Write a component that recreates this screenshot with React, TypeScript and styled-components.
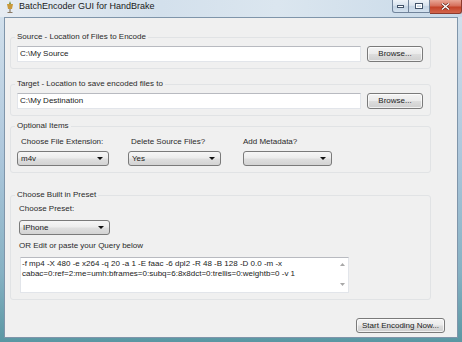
import * as React from 'react';
import styled, { createGlobalStyle } from 'styled-components';

const GlobalStyle = createGlobalStyle`
  html, body {
    margin: 0;
    padding: 0;
    background: #ffffff;
  }
  body {
    font-family: "Liberation Sans", Arial, sans-serif;
    color: #2a2a2a;
  }
  * {
    box-sizing: border-box;
  }
`;

const Window = styled.div`
  width: 462px;
  height: 342px;
  display: flex;
  flex-direction: column;
  background: linear-gradient(180deg, #d6e3ee 0%, #adc7dc 45%, #86b1c3 80%, #5a97a3 100%);
  overflow: hidden;
`;

const TitleBar = styled.div`
  height: 17px;
  display: flex;
  align-items: flex-start;
  background: linear-gradient(90deg, #e6ecf2 0%, #d3e0ec 35%, #dbe6ef 60%, #c8d9e8 100%);
`;

const AppIcon = styled.svg`
  width: 10px;
  height: 12px;
  margin: 1px 0 0 5px;
  flex-shrink: 0;
`;

const Title = styled.div`
  margin-left: 4px;
  font-size: 9px;
  line-height: 13px;
  color: #1a1a1a;
  white-space: nowrap;
`;

const Controls = styled.div`
  margin-left: auto;
  display: flex;
  height: 13px;
`;

const CaptionButton = styled.div<{ $w: number; $close?: boolean; $first?: boolean }>`
  width: ${(p) => p.$w}px;
  height: ${(p) => (p.$close ? 14 : 13)}px;
  display: flex;
  align-items: center;
  justify-content: center;
  border: 1px solid ${(p) => (p.$close ? '#8d3b2e' : '#71849b')};
  border-top: none;
  border-left: ${(p) => (p.$first ? '1px solid #71849b' : 'none')};
  border-bottom-left-radius: ${(p) => (p.$first ? 3 : 0)}px;
  border-bottom-right-radius: ${(p) => (p.$close ? 3 : 0)}px;
  background: ${(p) =>
    p.$close
      ? 'linear-gradient(180deg, #e9a797 0%, #d6705c 45%, #c44329 55%, #d2654c 100%)'
      : 'linear-gradient(180deg, #eef3f8 0%, #d8e3ee 45%, #c3d3e3 55%, #d4e2ef 100%)'};
`;

const Client = styled.div`
  flex: 1;
  margin: 0 4px 4px 4px;
  background: #f0f0f0;
  border: 1px solid #7f95aa;
  padding: 13px 0 0 5px;
  display: flex;
  flex-direction: column;
`;

const GroupBox = styled.fieldset<{ $gap: number }>`
  width: 421px;
  min-width: 0;
  margin: ${(p) => p.$gap}px 0 0 0;
  padding: 0 7px 6px 6px;
  border: 1px solid #e1e3e5;
  border-radius: 3px;
`;

const Caption = styled.legend`
  padding: 0 2px;
  margin-left: -2px;
  font-size: 8px;
  line-height: 12px;
  color: #2a2a2a;
`;

const PathRow = styled.div`
  margin-top: 3px;
  display: flex;
  align-items: center;
  gap: 6px;
`;

const TextBox = styled.div`
  flex: 1;
  height: 16px;
  background: #ffffff;
  border: 1px solid #e2e5ea;
  border-top-color: #b8bac0;
  padding-left: 2px;
  font-size: 8px;
  line-height: 14px;
  color: #222;
  white-space: nowrap;
`;

const PushButton = styled.div<{ $w: number }>`
  width: ${(p) => p.$w}px;
  height: 16px;
  border: 1px solid #7a7a7a;
  border-radius: 3px;
  background: linear-gradient(180deg, #f4f4f4 0%, #ebebeb 48%, #dddddd 52%, #cfcfcf 100%);
  box-shadow: inset 0 0 0 1px rgba(255, 255, 255, 0.7);
  font-size: 8px;
  line-height: 14px;
  text-align: center;
  color: #222;
  white-space: nowrap;
`;

const OptionsRow = styled.div`
  display: flex;
  margin-top: 4px;
`;

const OptionColumn = styled.div<{ $w?: number }>`
  width: ${(p) => (p.$w ? `${p.$w}px` : 'auto')};
  display: flex;
  flex-direction: column;
`;

const FieldLabel = styled.div<{ $indent?: number; $top?: number }>`
  padding-left: ${(p) => p.$indent ?? 0}px;
  margin-top: ${(p) => p.$top ?? 0}px;
  font-size: 8px;
  line-height: 12px;
  color: #2a2a2a;
  white-space: nowrap;
`;

const Combo = styled.div<{ $w: number; $top?: number }>`
  width: ${(p) => p.$w}px;
  height: 15px;
  margin-top: ${(p) => p.$top ?? 3}px;
  display: flex;
  align-items: center;
  padding: 0 5px 0 3px;
  border: 1px solid #7a7a7a;
  border-radius: 3px;
  background: linear-gradient(180deg, #f6f6f6 0%, #ececec 48%, #dfdfdf 52%, #d3d3d3 100%);
  font-size: 8px;
  color: #222;
`;

const ComboText = styled.span`
  flex: 1;
  white-space: nowrap;
`;

const ComboArrow = styled.span`
  width: 0;
  height: 0;
  border-left: 3px solid transparent;
  border-right: 3px solid transparent;
  border-top: 3px solid #111;
`;

const PresetBody = styled.div`
  padding-left: 2px;
  display: flex;
  flex-direction: column;
  align-items: flex-start;
`;

const QueryBox = styled.div`
  width: 329px;
  height: 36px;
  margin: 5px 0 0 1px;
  display: flex;
  background: #ffffff;
  border: 1px solid #e2e5ea;
  border-top-color: #b8bac0;
`;

const QueryText = styled.div`
  flex: 1;
  padding: 1px 0 0 1px;
  font-size: 8px;
  line-height: 10px;
  color: #222;
  white-space: nowrap;
  overflow: hidden;
`;

const ScrollBar = styled.div`
  width: 12px;
  display: flex;
  flex-direction: column;
  align-items: center;
  justify-content: space-between;
  padding: 5px 0 6px 0;
`;

const ScrollArrow = styled.svg`
  width: 5px;
  height: 3px;
`;

const StartButton = styled(PushButton)`
  align-self: flex-end;
  margin: 18px 12px 0 0;
  height: 15px;
  line-height: 13px;
`;

const ComboBox = ({ w, value, top }: { w: number; value?: string; top?: number }) => (
  <Combo $w={w} $top={top}>
    <ComboText>{value}</ComboText>
    <ComboArrow />
  </Combo>
);

export default function App() {
  return (
    <>
      <GlobalStyle />
      <Window>
        <TitleBar>
          <AppIcon viewBox="0 0 10 12">
            <path d="M5 0 L6 3 L4 3 Z" fill="#6c8f3a" />
            <path d="M2 3 L8 3 L7 8 L3 8 Z" fill="#c99a3c" />
            <rect x="4.4" y="8" width="1.2" height="3" fill="#8a7a66" />
            <rect x="2.5" y="11" width="5" height="1" fill="#8a7a66" />
          </AppIcon>
          <Title>BatchEncoder GUI for HandBrake</Title>
          <Controls>
            <CaptionButton $w={17} $first>
              <svg width="7" height="3" viewBox="0 0 7 3">
                <rect x="0.5" y="0.5" width="6" height="2" fill="#fff" stroke="#42546a" strokeWidth="1" />
              </svg>
            </CaptionButton>
            <CaptionButton $w={21}>
              <svg width="8" height="6" viewBox="0 0 8 6">
                <rect x="0.5" y="0.5" width="7" height="5" fill="none" stroke="#42546a" strokeWidth="1" />
                <rect x="1.5" y="1.5" width="5" height="3" fill="none" stroke="#ffffff" strokeWidth="1" />
              </svg>
            </CaptionButton>
            <CaptionButton $w={32} $close>
              <svg width="9" height="7" viewBox="0 0 9 7">
                <path d="M1 0.5 L8 6.5 M8 0.5 L1 6.5" stroke="#5a1a10" strokeWidth="2.6" />
                <path d="M1 0.5 L8 6.5 M8 0.5 L1 6.5" stroke="#ffffff" strokeWidth="1.4" />
              </svg>
            </CaptionButton>
          </Controls>
        </TitleBar>

        <Client>
          <GroupBox $gap={0}>
            <Caption>Source - Location of Files to Encode</Caption>
            <PathRow>
              <TextBox>C:\My Source</TextBox>
              <PushButton $w={56}>Browse...</PushButton>
            </PathRow>
          </GroupBox>

          <GroupBox $gap={9}>
            <Caption>Target - Location to save encoded files to</Caption>
            <PathRow>
              <TextBox>C:\My Destination</TextBox>
              <PushButton $w={56}>Browse...</PushButton>
            </PathRow>
          </GroupBox>

          <GroupBox $gap={4}>
            <Caption>Optional Items</Caption>
            <OptionsRow>
              <OptionColumn $w={111}>
                <FieldLabel $indent={4}>Choose File Extension:</FieldLabel>
                <ComboBox w={92} value="m4v" />
              </OptionColumn>
              <OptionColumn $w={115}>
                <FieldLabel $indent={3}>Delete Source Files?</FieldLabel>
                <ComboBox w={93} value="Yes" />
              </OptionColumn>
              <OptionColumn>
                <FieldLabel>Add Metadata?</FieldLabel>
                <ComboBox w={89} />
              </OptionColumn>
            </OptionsRow>
          </GroupBox>

          <GroupBox $gap={16}>
            <Caption>Choose Built in Preset</Caption>
            <PresetBody>
              <FieldLabel $top={2}>Choose Preset:</FieldLabel>
              <ComboBox w={91} value="IPhone" top={5} />
              <FieldLabel $top={5}>OR Edit or paste your Query below</FieldLabel>
              <QueryBox>
                <QueryText>
                  <div>-f mp4 -X 480 -e x264 -q 20 -a 1 -E faac -6 dpl2 -R 48 -B 128 -D 0.0 -m -x</div>
                  <div>cabac=0:ref=2:me=umh:bframes=0:subq=6:8x8dct=0:trellis=0:weightb=0 -v 1</div>
                </QueryText>
                <ScrollBar>
                  <ScrollArrow viewBox="0 0 5 3">
                    <path d="M0 3 L2.5 0 L5 3 Z" fill="#a8a8a8" />
                  </ScrollArrow>
                  <ScrollArrow viewBox="0 0 5 3">
                    <path d="M0 0 L2.5 3 L5 0 Z" fill="#a8a8a8" />
                  </ScrollArrow>
                </ScrollBar>
              </QueryBox>
            </PresetBody>
          </GroupBox>

          <StartButton $w={89}>Start Encoding Now...</StartButton>
        </Client>
      </Window>
    </>
  );
}
